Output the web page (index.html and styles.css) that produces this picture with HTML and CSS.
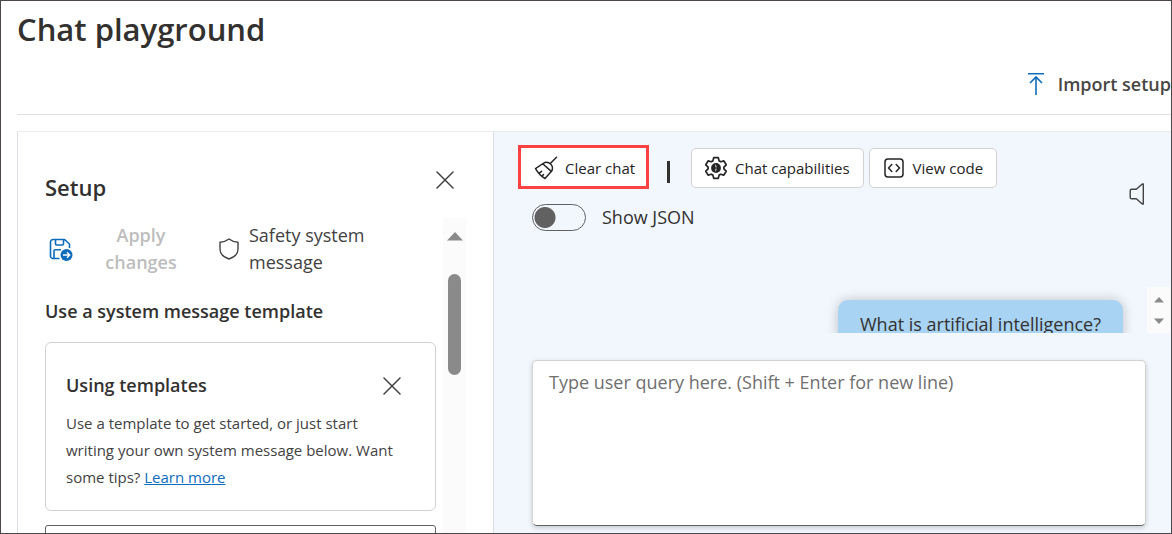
FILE: index.html
```html
<!DOCTYPE html>
<html lang="en">
<head>
<meta charset="utf-8">
<meta name="viewport" content="width=device-width, initial-scale=1">
<title>Chat playground</title>
<link rel="stylesheet" href="styles.css">
</head>
<body>
<div class="app">
  <header class="header">
    <h1 class="title">Chat playground</h1>
    <div class="commands">
      <button class="import" type="button">
        <svg width="18" height="24" viewBox="0 0 18 24" fill="none" stroke="currentColor" stroke-width="1.6"><path d="M1 1.8h16M9 23V5M3 11l6-6 6 6"/></svg>
        <span>Import setup</span>
      </button>
    </div>
  </header>
  <main class="main">
    <section class="setup" aria-labelledby="setup-title">
      <div class="setup-head">
        <h2 class="setup-title" id="setup-title">Setup</h2>
        <button class="icon-button" type="button" aria-label="Close setup">
          <svg width="18" height="18" viewBox="0 0 18 18" fill="none" stroke="currentColor" stroke-width="1.5" stroke-linecap="round"><path d="M1 1l16 16M17 1L1 17"/></svg>
        </button>
      </div>
      <div class="setup-scroll">
        <div class="setup-body">
          <div class="setup-actions">
            <button class="apply" type="button" disabled>
              <svg class="blue" width="24" height="24" viewBox="0 0 24 24" fill="none" stroke="currentColor" stroke-width="1.6"><path d="M10.500 21.500H4A2.500 2.500 0 0 1 1.500 19V5A2.500 2.500 0 0 1 4 2.500h11.500L20.500 7v4M6.500 2.500V7a1 1 0 0 0 1 1h6a1 1 0 0 0 1-1V2.500M5 21.500V14a1.300 1.300 0 0 1 1.300-1.300H12"/><circle cx="17.500" cy="18" r="6" fill="currentColor" stroke="none"/><path d="M14 18h6.500M18 15.200l2.800 2.800-2.800 2.800" stroke="#fff" stroke-width="1.300"/></svg>
              <span class="apply-label">Apply changes</span>
            </button>
            <button class="safety" type="button">
              <svg width="20" height="22" viewBox="0 0 20 22" fill="none" stroke="currentColor" stroke-width="1.400" stroke-linejoin="round"><path d="M10 1C7.500 3 4.500 4 1 4.200V11c0 5 3.500 8.200 9 10 5.500-1.800 9-5 9-10V4.200C15.500 4 12.500 3 10 1z"/></svg>
              <span class="safety-label">Safety system message</span>
            </button>
          </div>
          <h3 class="section-title">Use a system message template</h3>
          <article class="card">
            <div class="card-head">
              <h4 class="card-title">Using templates</h4>
              <button class="icon-button" type="button" aria-label="Dismiss">
                <svg width="18" height="18" viewBox="0 0 18 18" fill="none" stroke="currentColor" stroke-width="1.500" stroke-linecap="round"><path d="M1 1l16 16M17 1L1 17"/></svg>
              </button>
            </div>
            <p class="card-text">Use a template to get started, or just start writing your own system message below. Want some tips? <a class="link" href="#">Learn more</a></p>
          </article>
          <div class="picker"></div>
        </div>
        <div class="scrollbar" aria-hidden="true">
          <svg width="16" height="9" viewBox="0 0 16 9"><path d="M0 8.500L8 0l8 8.500z" fill="#8a8a8a"/></svg>
          <div class="thumb"></div>
        </div>
      </div>
    </section>
    <section class="chat" aria-label="Chat">
      <div class="chat-top">
        <div class="tools">
          <div class="toolbar">
            <div class="highlight">
              <button class="tool" type="button">
                <svg width="24" height="24" viewBox="0 0 24 24" fill="none" stroke="currentColor" stroke-width="1.500" stroke-linecap="round" stroke-linejoin="round"><path d="M22.500 1.200l-6 6M9 7.500c2.500-1.700 5.500-1.500 7.600.5 2 2 2.300 5 .9 7.300L11 22.500C7.200 20.500 4 17 1.500 12.700zM8.700 7.700l8.600 7.700M5 17.300l2.600-2M8 20.200l1.500-1.700"/></svg>
                <span>Clear chat</span>
              </button>
            </div>
            <div class="separator"></div>
            <button class="tool" type="button">
              <svg width="24" height="24" viewBox="0 0 24 24" fill="none" stroke="currentColor" stroke-width="1.700" stroke-linejoin="round"><path d="M9.700 1.700h4.600l.8 3.200 1.600.9 3.200-.9 2.300 3.900-2.300 2.300v1.800l2.300 2.300-2.300 3.900-3.200-.9-1.600.9-.8 3.200H9.700l-.8-3.200-1.600-.9-3.200.9-2.300-3.900 2.300-2.300v-1.800L1.800 8.800l2.300-3.900 3.200.9 1.600-.9z"/><circle cx="12" cy="12" r="4.900" fill="currentColor" stroke="none"/><path d="M11.300 8.300v7.400a5.500 5.500 0 0 0 0-7.400z" fill="#fff" stroke="none"/><path d="M11.300 10.200l2 1.800-2 1.800z" fill="currentColor" stroke="none"/></svg>
              <span>Chat capabilities</span>
            </button>
            <button class="tool" type="button">
              <svg width="24" height="24" viewBox="-2 -2 24 24" fill="none" stroke="currentColor" stroke-width="1.500" stroke-linecap="round" stroke-linejoin="round"><rect x="1" y="1" width="18" height="18" rx="3"/><path d="M7.800 6.500L4.500 10l3.300 3.500M12.200 6.500l3.300 3.500-3.300 3.500"/></svg>
              <span>View code</span>
            </button>
          </div>
          <label class="toggle"><input class="switch" type="checkbox" role="switch"><span>Show JSON</span></label>
        </div>
        <button class="icon-button" type="button" aria-label="Speaker">
          <svg width="16" height="22" viewBox="0 0 16 22" fill="none" stroke="currentColor" stroke-width="1.400" stroke-linejoin="round"><path d="M14.300 1v20h-1L7.300 15.700H2.500a1.300 1.300 0 0 1-1.300-1.300V7.600a1.300 1.300 0 0 1 1.300-1.300h4.800L13.300 1z"/></svg>
        </button>
      </div>
      <div class="messages">
        <div class="bubble">What is artificial intelligence?</div>
        <div class="message-scrollbar" aria-hidden="true">
          <svg width="10" height="6" viewBox="0 0 10 6"><path d="M0 5.500L5 0l5 5.500z" fill="#8a8a8a"/></svg>
          <svg width="10" height="6" viewBox="0 0 10 6"><path d="M0 .5h10L5 6z" fill="#8a8a8a"/></svg>
        </div>
      </div>
      <textarea class="query" aria-label="User query" placeholder="Type user query here. (Shift + Enter for new line)"></textarea>
    </section>
  </main>
</div>
</body>
</html>
```
FILE: styles.css
```css
* { box-sizing: border-box; }

body {
  margin: 0;
  font-family: "Open Sans", "Noto Sans", sans-serif;
  font-size: 18px;
  color: #323130;
  background: #fff;
}

button {
  font: inherit;
  color: inherit;
  background: none;
  border: 0;
  padding: 0;
  cursor: pointer;
}

svg { display: block; flex: none; }

h1, h2, h3, h4, p { margin: 0; font-weight: 600; }

.app {
  display: flex;
  flex-direction: column;
  height: 100vh;
  overflow: hidden;
  border: 1px solid #4c484a;
  padding-left: 16px;
}

.header { border-bottom: 1px solid #e0e0e0; }

.title { font-size: 31px; line-height: 56px; }

.commands { display: flex; justify-content: flex-end; }

.import {
  display: flex;
  align-items: center;
  gap: 13px;
  height: 57px;
  padding-bottom: 4px;
  font-weight: 600;
  white-space: nowrap;
  color: #484644;
}

.import svg, .blue { color: #0f6cbd; }

.main {
  display: grid;
  grid-template-columns: minmax(0, 477fr) minmax(0, 677fr);
  flex: 1;
  min-height: 0;
  margin-top: 16px;
  border-top: 1px solid #ececec;
}

.setup {
  display: flex;
  flex-direction: column;
  min-height: 0;
  border: solid #dcdfe4;
  border-width: 0 1px;
  padding: 35px 27px 0;
}

.setup-head {
  display: flex;
  align-items: center;
  justify-content: space-between;
  height: 40px;
  padding-right: 12px;
}

.setup-head .icon-button { align-self: flex-start; padding-top: 4px; }

.setup-title { font-size: 22px; line-height: 40px; }

.icon-button { color: #424242; }

.setup-scroll {
  display: flex;
  flex: 1;
  min-height: 0;
  margin-top: 11px;
  gap: 7px;
}

.setup-body { flex: 1; min-width: 0; overflow: hidden; }

.setup-actions { display: flex; gap: 32px; padding-top: 4px; line-height: 27px; }

.apply {
  display: flex;
  align-items: center;
  gap: 22px;
  padding-left: 4px;
  font-weight: 600;
  color: #bdbdbd;
}

.apply-label { width: 92px; text-align: center; }

.safety {
  display: flex;
  align-items: center;
  gap: 10px;
  text-align: left;
  color: #424242;
}

.safety-label { width: 130px; }

.section-title { margin-top: 22px; font-size: 18px; line-height: 27px; }

.card {
  margin-top: 17px;
  border: 1px solid #d1d1d1;
  border-radius: 6px;
  padding: 28px 20px 19px;
}

.card-head {
  display: flex;
  align-items: center;
  justify-content: space-between;
  padding-right: 14px;
}

.card-title { font-size: 18px; line-height: 29px; }

.card-text {
  margin-top: 10px;
  padding-right: 10px;
  font-size: 15px;
  font-weight: 400;
  line-height: 27px;
  color: #424242;
}

.link { color: #0f6cbd; }

.picker {
  height: 48px;
  margin-top: 14px;
  border: 1px solid #616161;
  border-radius: 3px;
}

.scrollbar {
  display: flex;
  flex-direction: column;
  align-items: center;
  width: 23px;
  padding-top: 14px;
  background: #fbfbfb;
}

.thumb { width: 13px; height: 101px; margin-top: 33px; border-radius: 7px; background: #8a8a8a; }

.chat {
  display: flex;
  flex-direction: column;
  min-width: 0;
  min-height: 0;
  background: #f2f7fe;
}

.chat-top {
  display: flex;
  align-items: center;
  justify-content: space-between;
  padding: 13px 26px 0 24px;
}

.chat-top > .icon-button { margin-top: 12px; }

.toolbar { display: flex; align-items: flex-end; gap: 5px; }

.toolbar > .tool { margin-bottom: 1px; }

.highlight { border: 3px solid #fb4141; }

.highlight .tool { height: 38px; padding: 2px 10px 0 12px; border-color: #fff; }

.separator { width: 3px; height: 22px; margin: 0 16px 6px 13px; background: #323130; }

.tool {
  display: flex;
  align-items: center;
  gap: 7px;
  height: 40px;
  padding: 0 13px 0 12px;
  border: 1px solid #d1d1d1;
  border-radius: 5px;
  background: #fff;
  font-size: 15px;
  white-space: nowrap;
  color: #242424;
}

.toggle {
  display: flex;
  align-items: center;
  gap: 16px;
  margin: 14px 0 0 14px;
  line-height: 28px;
}

.switch {
  appearance: none;
  width: 54px;
  height: 27px;
  margin: 0;
  border: 1px solid #616161;
  border-radius: 14px;
  background: radial-gradient(circle at 12px 50%, #616161 10px, transparent 11px);
}

.messages {
  display: flex;
  justify-content: flex-end;
  height: 59px;
  margin-top: 43px;
  padding-right: 1px;
  gap: 24px;
  overflow: hidden;
}

.bubble {
  margin-top: 26px;
  height: 60px;
  padding: 10px 22px;
  border-radius: 10px;
  background: #a9d3f2;
  box-shadow: 0 0 12px #00000038;
  line-height: 28px;
  white-space: nowrap;
}

.message-scrollbar {
  display: flex;
  flex-direction: column;
  align-items: center;
  gap: 15px;
  width: 23px;
  height: 46px;
  margin-top: 13px;
  padding-top: 10px;
  background: #fbfbfb;
}

.query {
  flex: 1;
  min-height: 0;
  margin: 27px 25px 7px 38px;
  padding: 9px 16px;
  border: 1px solid #d1d1d1;
  border-bottom-color: #616161;
  border-radius: 5px;
  box-shadow: 0 2px 5px #00000030;
  background: #fff;
  font: inherit;
  resize: none;
}

.query::placeholder { color: #707070; }
```
